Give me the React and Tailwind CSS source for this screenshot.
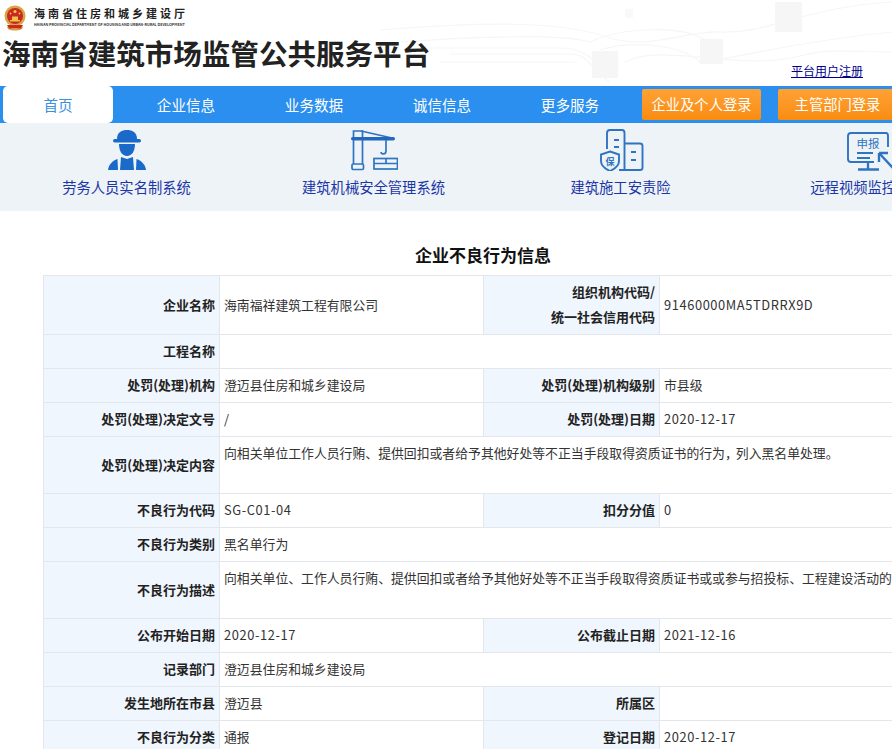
const FONT = { fontFamily: '"Microsoft YaHei", "Noto Sans CJK SC", "Noto Sans", sans-serif' };

function Emblem() {
  return (
    <svg width="24" height="26" viewBox="0 0 24 26" className="shrink-0">
      <path d="M3 20 C5 25 19 25 21 20 L19 24 C15 26 9 26 5 24 Z" fill="#d9a13a" />
      <circle cx="12" cy="11" r="10.5" fill="#d8a544" />
      <circle cx="12" cy="11" r="8" fill="#c9291f" />
      <circle cx="12" cy="6.5" r="1.6" fill="#f2c84b" />
      <circle cx="7.5" cy="8.5" r="0.9" fill="#f2c84b" />
      <circle cx="16.5" cy="8.5" r="0.9" fill="#f2c84b" />
      <path d="M7 15 h10 v1.6 H7 Z M9 11.5 h6 v3.5 H9 Z" fill="#f0c14b" />
      <path d="M4 20 h16 l-2 3.6 H6 Z" fill="#c9291f" />
    </svg>
  );
}

function HeaderLines() {
  return (
    <svg width="892" height="86" viewBox="0 0 892 86" className="absolute left-0 top-0" fill="none">
      <g stroke="#f5f6f7" strokeWidth="1.2">
        <path d="M380 30 C480 22 560 20 610 38 C650 50 690 30 720 32 C770 34 800 8 892 2" />
        <path d="M400 42 C480 36 560 34 590 42 C620 28 680 24 705 40" />
        <path d="M430 48 H560 C585 48 590 60 600 64" />
        <path d="M450 54 H570 C590 54 590 70 610 82" />
        <path d="M440 62 H575" />
        <path d="M600 50 C630 40 680 44 700 62 C740 58 790 42 892 32" />
        <path d="M625 62 C660 42 740 72 800 56 C830 48 860 52 892 52" />
      </g>
      <rect x="592" y="51" width="26" height="27" fill="#f6f6f7" />
      <rect x="700" y="39" width="23" height="25" fill="#f6f6f7" />
      <rect x="775" y="2" width="27" height="30" fill="#f6f6f7" />
      <rect x="625" y="9" width="8" height="9" fill="#f9f9fa" />
    </svg>
  );
}

function Worker() {
  return (
    <svg width="40" height="42" viewBox="0 0 40 42" fill="#1a6bc9">
      <path d="M10 10 C10 3 15 1 20 1 C25 1 30 3 30 10 Z" />
      <rect x="6" y="10" width="28" height="3.4" rx="1.7" />
      <path d="M12 15 H28 C28 22 25 27 20 27 C15 27 12 22 12 15 Z" />
      <path d="M14 28 L20 30 L26 28 L27 41 H13 Z" />
      <path d="M10.5 30 L11 41 H1 C1.5 36 5 32 10.5 30 Z" />
      <path d="M29.5 30 L29 41 H39 C38.5 36 35 32 29.5 30 Z" />
    </svg>
  );
}

function Crane() {
  return (
    <svg width="48" height="42" viewBox="0 0 48 42" fill="none" stroke="#2f74c0" strokeWidth="1.7">
      <path d="M3.5 9 V2 H12.5 V9" />
      <path d="M11 2 L42 9" />
      <rect x="1" y="8" width="44" height="3.6" rx="1.8" fill="#2368bd" stroke="none" />
      <path d="M3.5 11 V35 M12.5 11 V35" />
      <rect x="2" y="35" width="11.5" height="5.5" rx="1.2" />
      <path d="M36 11 V22 C36 26 31 25.5 31 23" />
      <rect x="24" y="29.5" width="23.5" height="10.5" />
      <path d="M24 34.5 H47.5 M36 29.5 V34.5" />
    </svg>
  );
}

function BuildingShield() {
  return (
    <svg width="46" height="44" viewBox="0 0 46 44" fill="none" stroke="#2f74c0" strokeWidth="1.9">
      <path d="M9 22 V6 C9 4 10 3 12 3 H24 C25.5 3 26.5 4 26.5 6 V43 H21" />
      <path d="M26.5 16.5 H42 C43.5 16.5 44.5 17.5 44.5 19 V41 C44.5 42.5 43.5 43 42 43 H26.5" />
      <path d="M16 13 H21 M16 20 H21 M33 25 H38 M33 33 H38" />
      <path d="M12 24.5 L21 27.5 V34 C21 39 16.5 42 12 44 C7.5 42 3 39 3 34 V27.5 Z" />
      <text x="12" y="38" fontSize="9" fontWeight="700" fill="#2f74c0" stroke="none" textAnchor="middle" style={FONT}>保</text>
    </svg>
  );
}

function Screen() {
  return (
    <svg width="44" height="42" viewBox="0 0 44 42" fill="none" stroke="#2f74c0" strokeWidth="1.9" className="overflow-visible">
      <path d="M28 33 H5 C3 33 2 32 2 30 V7 C2 5 3 4 5 4 H40 C41.5 4 42 5 42 7 V18" />
      <path d="M11 24 H27 M11 29 H24" />
      <path d="M22 33 V40 M12 40.5 H33" strokeWidth="2.3" />
      <path d="M33 24 L47 39 M33 24 V33 M33 24 H42" strokeWidth="2.4" />
      <text x="22" y="19" fontSize="11.5" fill="#2f74c0" stroke="none" textAnchor="middle" style={FONT}>申报</text>
    </svg>
  );
}

function Label({ children }) {
  return (
    <td className="border border-[#e3e7eb] bg-[#f0f6fd] pr-[4px] pb-[2px] text-right align-middle text-[13px] font-bold leading-[25px] text-[#222]">
      {children}
    </td>
  );
}

function Value({ children, colSpan, top, latin }) {
  return (
    <td colSpan={colSpan} className={`border border-[#e3e7eb] bg-white pl-[4px] text-[12.85px] leading-[25px] text-[#333] ${top ? 'align-top pt-[3px]' : 'align-middle pb-[2px]'} ${latin ? 'tracking-[0.6px]' : ''}`}>
      {children}
    </td>
  );
}

const strip = [
  { label: '劳务人员实名制系统', icon: <Worker /> },
  { label: '建筑机械安全管理系统', icon: <Crane /> },
  { label: '建筑施工安责险', icon: <BuildingShield /> },
  { label: '远程视频监控系统', icon: <Screen /> },
];

export default function App() {
  return (
    <div className="h-[749px] w-[892px] overflow-hidden bg-white" style={FONT}>
      <header className="relative h-[86px] px-[3px]">
        <HeaderLines />
        <div className="relative flex items-start pt-[5px]">
          <Emblem />
          <div className="ml-[7px] flex flex-col">
            <span className="text-[11px] font-bold leading-[17px] tracking-[3px] text-[#222]">海南省住房和城乡建设厅</span>
            <span className="whitespace-nowrap text-[3.7px] font-bold leading-[5px] text-[#333]">HAINAN PROVINCIAL DEPARTMENT OF HOUSING AND URBAN-RURAL DEVELOPMENT</span>
          </div>
        </div>
        <h1 className="relative -ml-[1px] mt-[3px] whitespace-nowrap text-[28.55px] font-bold leading-[38px] text-[#222]">海南省建筑市场监管公共服务平台</h1>
        <a className="absolute left-[791px] top-[63px] text-[12px] leading-[16px] text-[#00008b] underline">平台用户注册</a>
      </header>

      <nav className="flex h-[37px] items-center bg-[#2a8fee] text-[14.6px] text-white">
        <div className="ml-[3px] flex h-[37px] w-[110px] shrink-0 items-center justify-center rounded-[5px] bg-white text-[#3d8fdc]">首页</div>
        <div className="ml-[9px] flex">
          <a className="flex w-[128px] justify-center">企业信息</a>
          <a className="flex w-[128px] justify-center">业务数据</a>
          <a className="flex w-[128px] justify-center">诚信信息</a>
          <a className="flex w-[128px] justify-center">更多服务</a>
        </div>
        <button className="ml-[8px] flex h-[31px] w-[119px] shrink-0 items-center justify-center rounded-[2px] bg-gradient-to-b from-[#ffa233] to-[#f88c10] pb-[2px] text-[14.3px] text-white">企业及个人登录</button>
        <button className="ml-[17px] flex h-[31px] w-[119px] shrink-0 items-center justify-center rounded-[2px] bg-gradient-to-b from-[#ffa233] to-[#f88c10] pb-[2px] text-[14.3px] text-white">主管部门登录</button>
      </nav>

      <section className="flex h-[88px] bg-[#eef3f7] pl-[3px]">
        {strip.map((s) => (
          <div key={s.label} className="flex h-full w-[247px] shrink-0 flex-col items-center">
            <div className="flex h-[48px] items-end">{s.icon}</div>
            <span className="mt-[6px] whitespace-nowrap text-[14.3px] leading-[20px] text-[#1c36a8]">{s.label}</span>
          </div>
        ))}
      </section>

      <main className="ml-[43px] w-[880px]">
        <h2 className="mt-[31px] mb-[8px] text-center text-[17px] font-bold leading-[25px] text-[#111]">企业不良行为信息</h2>
        <table className="w-[880px] table-fixed border-collapse">
          <colgroup>
            <col className="w-[176px]" />
            <col className="w-[264px]" />
            <col className="w-[176px]" />
            <col className="w-[264px]" />
          </colgroup>
          <tbody>
            <tr className="h-[59px]">
              <Label>企业名称</Label>
              <Value>海南福祥建筑工程有限公司</Value>
              <Label>组织机构代码/<br />统一社会信用代码</Label>
              <Value latin>91460000MA5TDRRX9D</Value>
            </tr>
            <tr className="h-[34px]">
              <Label>工程名称</Label>
              <Value colSpan={3}></Value>
            </tr>
            <tr className="h-[34px]">
              <Label>处罚(处理)机构</Label>
              <Value>澄迈县住房和城乡建设局</Value>
              <Label>处罚(处理)机构级别</Label>
              <Value>市县级</Value>
            </tr>
            <tr className="h-[34px]">
              <Label>处罚(处理)决定文号</Label>
              <Value>/</Value>
              <Label>处罚(处理)日期</Label>
              <Value latin>2020-12-17</Value>
            </tr>
            <tr className="h-[57px]">
              <Label>处罚(处理)决定内容</Label>
              <Value colSpan={3} top>向相关单位工作人员行贿、提供回扣或者给予其他好处等不正当手段取得资质证书的行为<span className="tracking-[-2px]">，</span>列入黑名单处理。</Value>
            </tr>
            <tr className="h-[34px]">
              <Label>不良行为代码</Label>
              <Value latin>SG-C01-04</Value>
              <Label>扣分分值</Label>
              <Value>0</Value>
            </tr>
            <tr className="h-[34px]">
              <Label>不良行为类别</Label>
              <Value colSpan={3}>黑名单行为</Value>
            </tr>
            <tr className="h-[57px]">
              <Label>不良行为描述</Label>
              <Value colSpan={3} top>向相关单位、工作人员行贿、提供回扣或者给予其他好处等不正当手段取得资质证书或或参与招投标、工程建设活动的</Value>
            </tr>
            <tr className="h-[34px]">
              <Label>公布开始日期</Label>
              <Value latin>2020-12-17</Value>
              <Label>公布截止日期</Label>
              <Value latin>2021-12-16</Value>
            </tr>
            <tr className="h-[34px]">
              <Label>记录部门</Label>
              <Value colSpan={3}>澄迈县住房和城乡建设局</Value>
            </tr>
            <tr className="h-[34px]">
              <Label>发生地所在市县</Label>
              <Value>澄迈县</Value>
              <Label>所属区</Label>
              <Value></Value>
            </tr>
            <tr className="h-[34px]">
              <Label>不良行为分类</Label>
              <Value>通报</Value>
              <Label>登记日期</Label>
              <Value latin>2020-12-17</Value>
            </tr>
          </tbody>
        </table>
      </main>
    </div>
  );
}
